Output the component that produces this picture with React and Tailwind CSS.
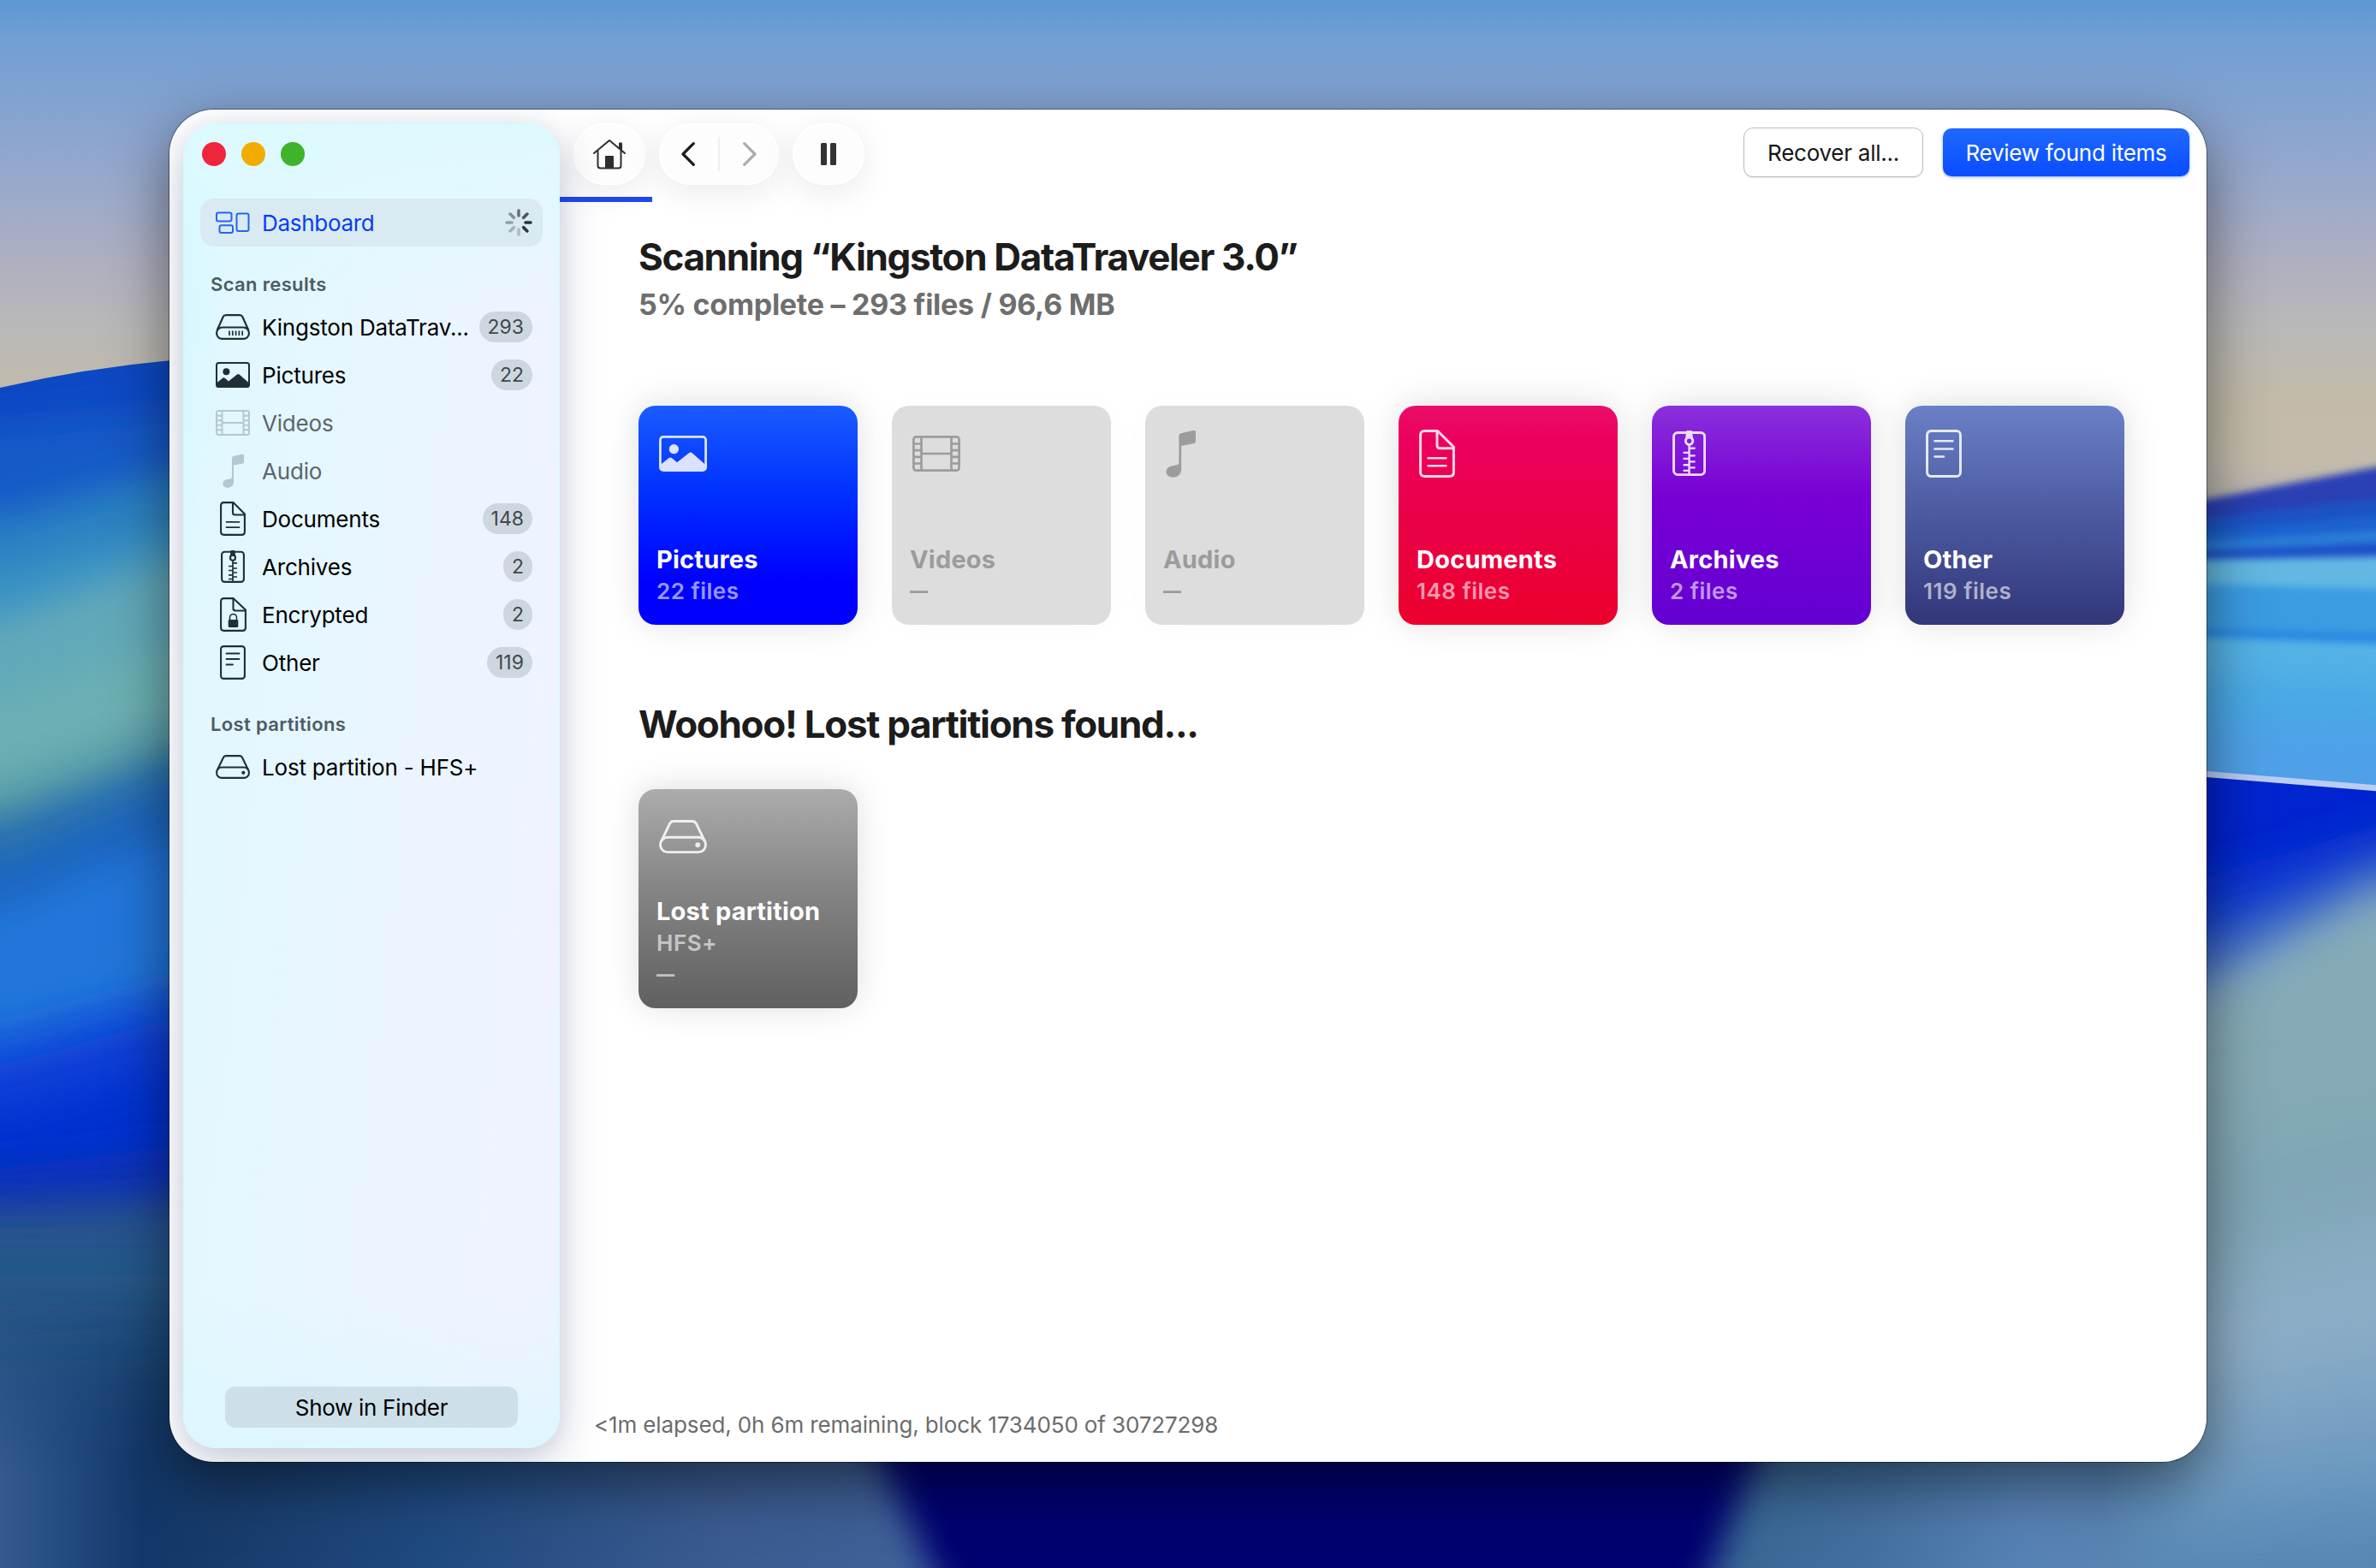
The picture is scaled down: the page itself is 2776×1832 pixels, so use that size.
import React from 'react';

const icons = {
  dashboard: {
    w: 40,
    h: 26,
    body: (
      <g fill="none" stroke="currentColor" strokeWidth="2">
        <rect x="1" y="1.5" width="17.5" height="10" rx="2.2" />
        <rect x="4.5" y="16.2" width="15.5" height="8.8" rx="2.2" />
        <rect x="24.5" y="2.5" width="14" height="20.5" rx="2.2" />
      </g>
    ),
  },
  drive: {
    w: 40,
    h: 30,
    body: (
      <g fill="none" stroke="currentColor" strokeWidth="2.2" strokeLinejoin="round">
        <path d="M1.6 19 8.6 3.2Q9.6 1.1 12 1.1h16q2.4 0 3.4 2.1L38.4 19" />
        <rect x="1.1" y="15.5" width="37.8" height="13.4" rx="6.5" />
        <path d="M16 19.5v5.5M19.8 19.5v5.5M23.6 19.5v5.5M27.4 19.5v5.5M31.2 19.5v5.5" strokeWidth="1.7" />
      </g>
    ),
  },
  partition: {
    w: 40,
    h: 28,
    body: (
      <g fill="none" stroke="currentColor" strokeWidth="2.1" strokeLinejoin="round">
        <path d="M2 17.5 9 3Q10 1.1 12.2 1.1h15.6Q30 1.1 31 3l7 14.5" />
        <rect x="1.1" y="14.5" width="37.8" height="12.4" rx="6" />
        <circle cx="32.3" cy="20.8" r="2.1" fill="currentColor" stroke="none" />
      </g>
    ),
  },
  picture: {
    w: 40,
    h: 30,
    body: (
      <>
        <rect x="1" y="1" width="38" height="28" rx="2.6" fill="none" stroke="currentColor" strokeWidth="2" />
        <circle cx="12.4" cy="11.2" r="4" fill="currentColor" />
        <path d="M1 24.5 8 18.8q1.4-1.1 2.8 0L15 22.4l10-8q1.3-1 2.6 0L39 24.5V27q0 2-2 2H3q-2 0-2-2z" fill="currentColor" />
      </>
    ),
  },
  video: {
    w: 40,
    h: 30,
    body: (
      <g fill="none" stroke="currentColor" strokeWidth="1.9">
        <rect x="1" y="1" width="38" height="28" rx="2.2" />
        <path d="M7.5 1v28M32.5 1v28M7.5 15h25" />
        <path d="M1 6.8h6.5M1 12.2h6.5M1 17.8h6.5M1 23.2h6.5M32.5 6.8H39M32.5 12.2H39M32.5 17.8H39M32.5 23.2H39" />
      </g>
    ),
  },
  audio: {
    w: 25,
    h: 40,
    body: (
      <path
        d="M11 5.2q0-1.8 1.7-2.1L22.6.8Q25 .3 25 1.6v8.6q0 1-1.2 1.2L13 13.6V33c0 4-3 6.8-6.8 6.8C2.6 39.8.4 37.8.4 35.2c0-3 2.5-4.6 5.6-5.1l3-.6q2-.4 2-2.4z"
        fill="currentColor"
      />
    ),
  },
  document: {
    w: 30,
    h: 40,
    body: (
      <g fill="none" stroke="currentColor" strokeWidth="2.1" strokeLinejoin="round" strokeLinecap="round">
        <path d="M4.5 1.1H15.5L28.9 14.5V35.5Q28.9 38.9 25.5 38.9H4.5Q1.1 38.9 1.1 35.5V4.5Q1.1 1.1 4.5 1.1z" />
        <path d="M15 1.2V13q0 2.5 2.5 2.5h11" />
        <path d="M7.5 23.8h15M7.5 30.2h15" strokeWidth="1.8" />
      </g>
    ),
  },
  archive: {
    w: 28,
    h: 38,
    body: (
      <>
        <g fill="none" stroke="currentColor" strokeWidth="2.1">
          <rect x="1.1" y="1.8" width="25.8" height="35.1" rx="3.3" />
          <circle cx="14" cy="8.8" r="3" />
          <path d="M14 12v25" strokeWidth="1.7" />
          <path d="M14 14.8h5M9 18.5h5M14 21h5M9 23.5h5M14 26h5M9 28.8h5M14 31h5M9 33.5h5" strokeWidth="1.7" />
        </g>
        <path d="M11.8 0h4.4l1.3 8.2a3.7 3.7 0 0 0-7 0z" fill="currentColor" />
      </>
    ),
  },
  encrypted: {
    w: 31,
    h: 40,
    body: (
      <>
        <g fill="none" stroke="currentColor" strokeWidth="2.1" strokeLinejoin="round">
          <path d="M4.5 1.1H15.5L29.9 14.5V35.5Q29.9 38.9 26.5 38.9H4.5Q1.1 38.9 1.1 35.5V4.5Q1.1 1.1 4.5 1.1z" />
          <path d="M15.5 1.2V13q0 2.5 2.5 2.5h11.5" />
          <path d="M11.5 27v-3.5a4 4 0 0 1 8 0V27" strokeWidth="1.6" />
        </g>
        <rect x="9.7" y="26" width="11.6" height="9" rx="1.5" fill="currentColor" />
      </>
    ),
  },
  other: {
    w: 30,
    h: 40,
    body: (
      <g fill="none" stroke="currentColor" strokeWidth="2.1" strokeLinecap="round">
        <rect x="1.1" y="1.1" width="27.8" height="37.8" rx="3.2" />
        <path d="M7.5 9.5h15M7.5 16h15M7.5 22.5h7.5" strokeWidth="1.8" />
      </g>
    ),
  },
};

const Icon = ({ name, scale = 1 }) => {
  const { w, h, body } = icons[name];
  return (
    <svg width={w * scale} height={h * scale} viewBox={`0 0 ${w} ${h}`} className="shrink-0">
      {body}
    </svg>
  );
};

// [y at the left end, y at the right end, colour, blur]
const leftBands = [
  [380, 360, '#0f49c4', 'a'],
  [500, 480, '#145ac8', 'b'],
  [605, 550, '#2a80c2', 'b'],
  [665, 610, '#3b93c4', 'b'],
  [725, 650, '#62a9b9', 'b'],
  [820, 750, '#6cb0b4', 'b'],
  [910, 840, '#5c9fa8', 'b'],
  [955, 880, '#2a72ae', 'b'],
  [1005, 920, '#1d66c0', 'b'],
  [1065, 980, '#2076da', 'b'],
  [1205, 1150, '#1658da', 'b'],
  [1245, 1190, '#0a3cd6', 'b'],
  [1305, 1250, '#0030d0', 'b'],
  [1365, 1340, '#0a30b8', 'b'],
  [1410, 1400, '#28528e', 'b'],
  [1460, 1460, '#28598a', 'b'],
  [1540, 1540, '#22507e', 'c'],
  [1640, 1620, '#1b4578', 'c'],
];

const rightBands = [
  [587, 545, '#2b41b4', 'a'],
  [607, 582, '#1f52c4', 'a'],
  [622, 602, '#1f62d0', 'a'],
  [634, 620, '#2b80d8', 'a'],
  [644, 634, '#1c50c8', 'a'],
  [654, 650, '#62b8e2', 'a'],
  [682, 688, '#3a9ce2', 'a'],
  [734, 740, '#2c88e2', 'a'],
  [744, 752, '#54b2e6', 'a'],
  [790, 795, '#49a8e6', 'b'],
  [850, 855, '#50a0e8', 'b'],
];

const rightLowBands = [
  [905, 921, '#0024d0', 'n'],
  [1030, 965, '#1038d0', 'b'],
  [1095, 1000, '#3a68c8', 'b'],
  [1150, 1035, '#7aa0c0', 'b'],
  [1195, 1070, '#86abb6', 'b'],
  [1340, 1300, '#80a6b6', 'c'],
  [1500, 1430, '#8cadc6', 'c'],
  [1640, 1590, '#7aa2c2', 'c'],
  [1730, 1690, '#6696c0', 'c'],
  [1800, 1780, '#5485b2', 'c'],
];

const blurs = { a: 'url(#blurA)', b: 'url(#blurB)', c: 'url(#blurC)' };

const Bands = ({ bands, x1, x2 }) =>
  bands.map(([l, r, color, blur]) => (
    <path
      key={color + l}
      d={`M${x1 - 300} ${l}H${x1}L${x2} ${r}H${x2 + 300}V2100H${x1 - 300}z`}
      fill={color}
      filter={blurs[blur]}
    />
  ));

const Wallpaper = () => (
  <svg className="absolute inset-0" width="2776" height="1832" viewBox="0 0 2776 1832">
    <defs>
      <linearGradient id="sky" x1="0" y1="0" x2="0" y2="600" gradientUnits="userSpaceOnUse">
        <stop offset="0" stopColor="#5c98d2" />
        <stop offset="0.08" stopColor="#729fd4" />
        <stop offset="0.26" stopColor="#8ba5cf" />
        <stop offset="0.4" stopColor="#9fabc9" />
        <stop offset="0.52" stopColor="#b0b0c0" />
        <stop offset="0.64" stopColor="#bab9b8" />
        <stop offset="0.78" stopColor="#c2bba9" />
        <stop offset="0.9" stopColor="#c3bcac" />
        <stop offset="1" stopColor="#b4aeb0" />
      </linearGradient>
      <linearGradient id="floor" x1="0" y1="0" x2="1200" y2="0" gradientUnits="userSpaceOnUse">
        <stop offset="0" stopColor="#345b90" />
        <stop offset="0.05" stopColor="#264f84" />
        <stop offset="0.14" stopColor="#123768" />
        <stop offset="0.22" stopColor="#183c6c" />
        <stop offset="0.42" stopColor="#1f4a80" />
        <stop offset="0.7" stopColor="#3b5b90" />
        <stop offset="1" stopColor="#41659c" />
      </linearGradient>
      <linearGradient id="floorFade" x1="0" y1="1500" x2="0" y2="1720" gradientUnits="userSpaceOnUse">
        <stop offset="0" stopColor="#fff" stopOpacity="0" />
        <stop offset="1" stopColor="#fff" />
      </linearGradient>
      <linearGradient id="floorRight" x1="1980" y1="0" x2="2776" y2="0" gradientUnits="userSpaceOnUse">
        <stop offset="0" stopColor="#356490" />
        <stop offset="0.25" stopColor="#436f9f" />
        <stop offset="0.48" stopColor="#5681b4" />
        <stop offset="0.6" stopColor="#5883b2" />
        <stop offset="0.75" stopColor="#5c8bb8" stopOpacity="0" />
      </linearGradient>
      <mask id="floorMask">
        <rect y="1500" width="1400" height="400" fill="url(#floorFade)" />
      </mask>
      <filter id="blurA" x="-10%" y="-10%" width="120%" height="120%">
        <feGaussianBlur stdDeviation="4" />
      </filter>
      <filter id="blurB" x="-50%" y="-20%" width="200%" height="140%">
        <feGaussianBlur stdDeviation="20" />
      </filter>
      <filter id="blurC" x="-50%" y="-50%" width="200%" height="200%">
        <feGaussianBlur stdDeviation="44" />
      </filter>
      <clipPath id="hill">
        <path d="M0 453Q100 430 200 421L700 400V1832H0z" />
      </clipPath>
      <clipPath id="rightSide">
        <path d="M2300 0H2776V1832H2300z" />
      </clipPath>
    </defs>
    <rect width="2776" height="1832" fill="url(#sky)" />
    <rect x="300" y="900" width="2200" height="932" fill="#41659c" />
    <g clipPath="url(#hill)">
      <Bands bands={leftBands} x1={0} x2={200} />
    </g>
    <g clipPath="url(#rightSide)">
      <Bands bands={rightBands} x1={2560} x2={2780} />
      <Bands bands={rightLowBands} x1={2560} x2={2780} />
      <path d="M2560 903Q2660 911 2780 921" fill="none" stroke="#b9cdf3" strokeWidth="7" />
    </g>
    <rect y="1500" width="1400" height="400" fill="url(#floor)" mask="url(#floorMask)" />
    <rect x="1900" y="1600" width="876" height="232" fill="url(#floorRight)" />
    <path d="M1000 1640L1120 1900H1975L2075 1640z" fill="#000070" filter="url(#blurB)" />
  </svg>
);

const Spinner = () => (
  <svg width="32" height="32" viewBox="-16 -16 32 32" stroke="#27353a" strokeWidth="3.6" strokeLinecap="round">
    {[0.65, 0.8, 1, 1, 0.25, 0.3, 0.4, 0.5].map((opacity, i) => (
      <path key={i} d="M0-8V-14" opacity={opacity} transform={`rotate(${i * 45})`} />
    ))}
  </svg>
);

const results = [
  { icon: 'drive', label: 'Kingston DataTrav...', count: 293 },
  { icon: 'picture', label: 'Pictures', count: 22 },
  { icon: 'video', label: 'Videos', muted: true },
  { icon: 'audio', label: 'Audio', muted: true },
  { icon: 'document', label: 'Documents', count: 148 },
  { icon: 'archive', label: 'Archives', count: 2 },
  { icon: 'encrypted', label: 'Encrypted', count: 2 },
  { icon: 'other', label: 'Other', count: 119 },
];

const SidebarRow = ({ icon, label, count, muted }) => (
  <li className="flex h-14 items-center pl-[18px] pr-3">
    <span className={`flex w-10 justify-center ${muted ? 'text-[#b3c7ce]' : 'text-[#1f2f35]'}`}>
      <Icon name={icon} />
    </span>
    <span className={`ml-[14px] whitespace-nowrap text-[26px] tracking-[-0.2px] ${muted ? 'text-[#5c666b]' : 'text-black'}`}>
      {label}
    </span>
    {count && (
      <span className="ml-auto flex h-9 min-w-[34px] items-center justify-center rounded-full bg-[#ced7e0] px-[10px] text-[23px] text-[#3f474c]">
        {count}
      </span>
    )}
  </li>
);

const Sidebar = () => (
  <aside className="relative flex w-[440px] shrink-0 flex-col rounded-[38px] bg-[linear-gradient(180deg,rgba(221,250,255,0.95),rgba(224,249,255,0)_14%,rgba(224,249,255,0)_88%,rgba(218,246,255,0.7)),linear-gradient(96deg,#d2f8ff_0%,#e1f7ff_12%,#e8f6ff_45%,#f0f3ff_88%,#edf4ff_100%)] px-5 pb-6 shadow-[0_16px_50px_rgba(35,45,100,0.24),0_0_24px_rgba(40,50,110,0.06),inset_0_0_4px_rgba(205,250,255,0.9)]">
    <div className="flex h-[88px] items-center gap-[18px] pb-4 pl-[2px]">
      <span className="size-7 rounded-full bg-[#f0243c]" />
      <span className="size-7 rounded-full bg-[#f0ad00]" />
      <span className="size-7 rounded-full bg-[#40b428]" />
    </div>
    <div className="flex h-14 items-center rounded-[16px] bg-[#d9eaf2] pl-[18px] pr-3">
      <span className="text-[#2465f0]">
        <Icon name="dashboard" />
      </span>
      <span className="ml-[14px] text-[26px] tracking-[-0.3px] text-[#0a3cf0]">Dashboard</span>
      <span className="ml-auto">
        <Spinner />
      </span>
    </div>
    <h2 className="mt-[25px] flex h-[38px] items-center pl-3 text-[22px] font-semibold tracking-[0.35px] text-[#4c5c63]">Scan results</h2>
    <ul className="mt-[3px]">
      {results.map((row) => (
        <SidebarRow key={row.label} {...row} />
      ))}
    </ul>
    <h2 className="mt-6 flex h-10 items-center pl-3 text-[22px] font-semibold tracking-[0.35px] text-[#4c5c63]">Lost partitions</h2>
    <ul className="mt-[2px]">
      <SidebarRow icon="partition" label="Lost partition - HFS+" />
    </ul>
    <button className="mx-auto mt-auto h-12 w-[342px] rounded-[12px] bg-[#cddfe8] text-[26px] tracking-[-0.3px] text-black">
      Show in Finder
    </button>
  </aside>
);

const Toolbar = () => (
  <header className="flex h-[102px] items-start pl-4 pr-5 pt-4">
    <button className="flex h-[72px] w-[84px] items-center justify-center rounded-full bg-[#fdfdfd] text-[#2e2e2e] shadow-[0_8px_40px_rgba(0,0,0,0.09),inset_0_0_0_2px_#fff]">
      <svg width="38" height="36" viewBox="0 0 38 36" fill="none" stroke="currentColor" strokeWidth="2" strokeLinejoin="round" strokeLinecap="round">
        <path d="M1 17 19 2l18 15M5.5 14v17.5q0 3 3 3h21q3 0 3-3V14M31 11.5V5.5h2V13" />
        <path d="M15 21h8v13h-8z" fill="currentColor" />
      </svg>
    </button>
    <div className="ml-4 flex h-[72px] w-[140px] items-center justify-between rounded-full bg-[#fdfdfd] px-[26px] shadow-[0_8px_40px_rgba(0,0,0,0.09),inset_0_0_0_2px_#fff]">
      <svg width="16" height="28" viewBox="0 0 16 28" fill="none" stroke="#1b1b1b" strokeWidth="3.2" strokeLinecap="round" strokeLinejoin="round">
        <path d="M14.3 1.7 2 14l12.3 12.3" />
      </svg>
      <span className="h-10 w-[2px] bg-[#efefef]" />
      <svg width="16" height="28" viewBox="0 0 16 28" fill="none" stroke="#acacac" strokeWidth="3.2" strokeLinecap="round" strokeLinejoin="round">
        <path d="M1.7 1.7 14 14 1.7 26.3" />
      </svg>
    </div>
    <button className="ml-4 flex h-[72px] w-[84px] items-center justify-center gap-1 rounded-full bg-[#fdfdfd] shadow-[0_8px_40px_rgba(0,0,0,0.09),inset_0_0_0_2px_#fff]">
      <span className="h-[26px] w-[7px] rounded-[1.5px] bg-[#333]" />
      <span className="h-[26px] w-[7px] rounded-[1.5px] bg-[#333]" />
    </button>
    <div className="ml-auto flex items-center gap-[23px] pt-[5px] text-[26px] tracking-[-0.26px]">
      <button className="h-[58px] w-[210px] rounded-[11px] border border-[#bdbdbd] bg-white text-[#161616] shadow-[0_1px_1px_rgba(0,0,0,0.1)]">
        Recover all...
      </button>
      <button className="h-14 w-[288px] rounded-[10px] bg-linear-to-b from-[#1f68ff] to-[#0a4bff] text-white shadow-[0_1px_3px_rgba(10,80,255,0.5)]">
        Review found items
      </button>
    </div>
  </header>
);

const cards = [
  { icon: 'picture', title: 'Pictures', detail: ['22 files'], bg: 'bg-[linear-gradient(#1a5cff,#0030ff_40%,#0000ff_80%)]' },
  { icon: 'video', title: 'Videos', detail: ['—'], empty: true },
  { icon: 'audio', title: 'Audio', detail: ['—'], empty: true },
  { icon: 'document', title: 'Documents', detail: ['148 files'], bg: 'bg-[linear-gradient(#ea0e68,#ec005e_15%,#ea0046_55%,#ec002c)]' },
  { icon: 'archive', title: 'Archives', detail: ['2 files'], bg: 'bg-[linear-gradient(#8a30dc,#7800d4_41%,#6400d2)]' },
  { icon: 'other', title: 'Other', detail: ['119 files'], bg: 'bg-[linear-gradient(#6a80c6,#4c5aa0_50%,#32367a)]' },
];

const partition = {
  icon: 'partition',
  title: 'Lost partition',
  detail: ['HFS+', '—'],
  bg: 'bg-[linear-gradient(#acacac,#868585_45%,#606060)]',
};

const Card = ({ icon, title, detail, bg, empty }) => (
  <article
    className={`flex size-64 flex-col rounded-[20px] px-[21px] pb-[21px] pt-7 font-semibold ${
      empty ? 'bg-[#dddddd] text-[#9c9c9c] shadow-[0_0_40px_rgba(0,0,0,0.02)]' : `${bg} text-white shadow-[0_-2px_40px_rgba(0,0,0,0.13)]`
    }`}
  >
    <div className={`flex h-14 items-center pl-[3px] ${empty ? '' : 'opacity-85'}`}>
      <Icon name={icon} scale={1.4} />
    </div>
    <h3 className="mt-auto text-[29px] font-bold leading-[36px] tracking-[0.2px]">{title}</h3>
    {detail.map((line) => (
      <p
        key={line}
        className={`leading-[37px] ${line === '—' ? 'text-[21px] font-extrabold' : 'text-[26px] tracking-[0.5px]'} ${
          empty ? '' : 'text-white/60'
        }`}
      >
        {line}
      </p>
    ))}
  </article>
);

const App = () => (
  <div className="relative h-[1832px] w-[2776px] overflow-hidden px-[198px] pt-[128px] font-['Inter',sans-serif]">
    <Wallpaper />
    <div className="relative h-[1580px] w-[2380px] rounded-[52px] shadow-[0_0_0_1px_rgba(0,0,0,0.4),0_24px_70px_rgba(0,0,0,0.5)]">
      <div className="flex h-full overflow-hidden rounded-[52px] bg-white p-4 pr-0">
        <Sidebar />
        <main className="-my-4 flex grow flex-col">
          <Toolbar />
          <div className="h-[6px] w-[108px] bg-[#1c49eb]" />
          <section className="pl-[92px] pt-[38px]">
            <h1 className="text-[44px] font-bold leading-[52px] tracking-[-1.35px] text-[#1c1c1c]">Scanning “Kingston DataTraveler 3.0”</h1>
            <p className="mt-2 text-[34px] font-bold leading-[44px] tracking-[-0.25px] text-[#6e6e6e]">5% complete – 293 files / 96,6 MB</p>
            <div className="mt-24 flex gap-10">
              {cards.map((card) => (
                <Card key={card.title} {...card} />
              ))}
            </div>
            <h2 className="mt-[90px] text-[44px] font-bold leading-[52px] tracking-[-1.3px] text-[#1c1c1c]">Woohoo! Lost partitions found...</h2>
            <div className="mt-[50px]">
              <Card {...partition} />
            </div>
          </section>
          <footer className="mt-auto pb-[26px] pl-10 text-[26px] leading-[34px] tracking-[-0.13px] text-[#6c6c6c]">
            {'<1m elapsed, 0h 6m remaining, block 1734050 of 30727298'}
          </footer>
        </main>
      </div>
    </div>
  </div>
);

export default App;
